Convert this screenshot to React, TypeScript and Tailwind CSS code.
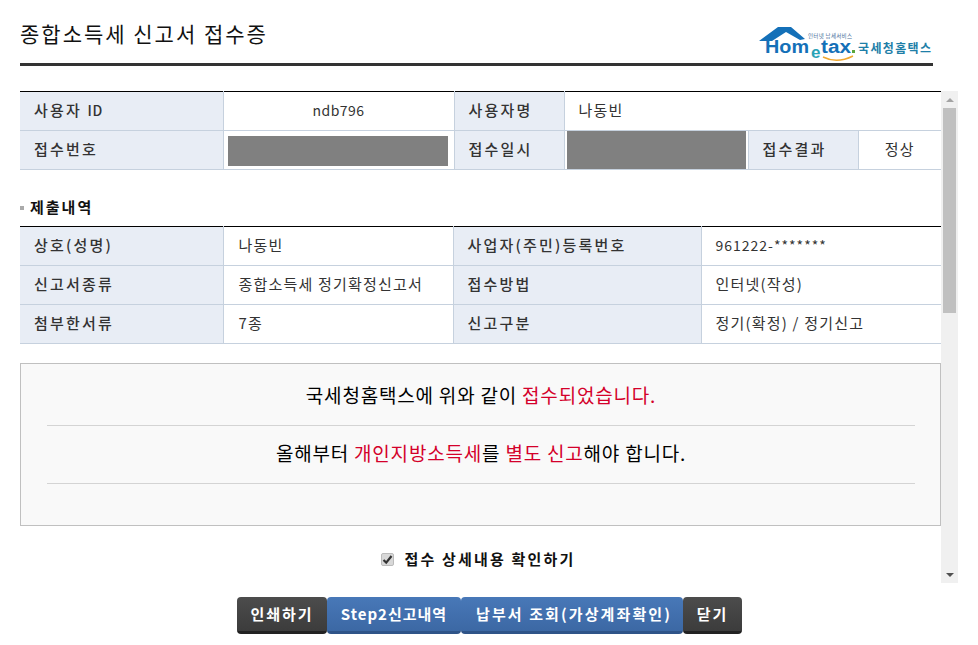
import React from 'react';

const KR = "font-['Noto_Sans_CJK_KR','Liberation_Sans',sans-serif]";
const thClass = "bg-[#e8edf5] border-t border-b border-[#c6d1de] border-l border-r pl-[14px] pb-[2px] text-left text-[15px] font-medium tracking-[2.2px] text-[#333] whitespace-nowrap first:border-l-0";
const tdClass = "border-t border-b border-[#c6d1de] border-l border-r pl-[14px] pb-[2px] text-left text-[15px] font-normal tracking-[1.2px] text-[#333] whitespace-nowrap last:border-r-0";
const tdCenter = "border-t border-b border-[#c6d1de] border-l border-r pb-[2px] text-center text-[15px] font-normal tracking-[1.2px] text-[#333] whitespace-nowrap last:border-r-0";

const filingRows = [
  { a: '상호(성명)', b: '나동빈', c: '사업자(주민)등록번호', d: '961222-*******', latin: true },
  { a: '신고서종류', b: '종합소득세 정기확정신고서', c: '접수방법', d: '인터넷(작성)' },
  { a: '첨부한서류', b: '7종', c: '신고구분', d: '정기(확정) / 정기신고' },
];

function Logo() {
  return (
    <svg width="174" height="36" viewBox="0 0 174 36">
      <path d="M0 14 L19 0 L32 0 L46 12 L41 13 L27 5 L13 14 Z" fill="#1470b8" />
      <text x="6" y="26" fontFamily="Liberation Sans" fontWeight="700" fontSize="18" fill="#1470b8" textLength="44" lengthAdjust="spacingAndGlyphs">Hom</text>
      <text x="52" y="31" fontFamily="Liberation Sans" fontWeight="700" fontSize="17" fill="#2aa3b8">e</text>
      <text x="62" y="26" fontFamily="Liberation Sans" fontWeight="700" fontSize="18" fill="#1470b8" textLength="30" lengthAdjust="spacingAndGlyphs">tax</text>
      <rect x="93" y="23" width="3" height="3" fill="#5aa53a" />
      <path d="M64 30 Q 78 37 94 29" stroke="#f0a830" strokeWidth="1.4" fill="none" />
      <text x="49" y="11" fontFamily="Noto Sans CJK KR" fontSize="5.5" fill="#4a6f9a" textLength="44">인터넷 납세서비스</text>
      <text x="99" y="26" fontFamily="Noto Sans CJK KR" fontWeight="700" fontSize="12" fill="#1f7fa8" textLength="73" lengthAdjust="spacing">국세청홈택스</text>
    </svg>
  );
}

function Btn({ label, blue, className }: { label: string; blue?: boolean; className: string }) {
  return (
    <div
      className={`${className} h-[37px] flex items-center justify-center rounded-[4px] text-white text-[15px] font-bold whitespace-nowrap border-b-[3px] ${
        blue
          ? 'bg-gradient-to-b from-[#4878b8] to-[#3c68a4] border-[#2f5488]'
          : 'bg-gradient-to-b from-[#4c4c4c] to-[#3c3c3c] border-[#222]'
      }`}
    >
      {label}
    </div>
  );
}

export default function App() {
  return (
    <div className={`${KR} w-[978px] h-[645px] overflow-hidden bg-white px-5`}>
      {/* Header */}
      <div className="w-[913px] h-[66px] border-b-[3px] border-[#333] flex justify-between items-end">
        <h1 className="text-[21px] font-normal tracking-[2px] text-[#111] mb-[16px] leading-[28px]">종합소득세 신고서 접수증</h1>
        <Logo />
      </div>

      {/* Scroll area */}
      <div className="mt-[25px] h-[492px] w-[938px] flex overflow-hidden">
        <div className="w-[921px] shrink-0">
          <table className="w-[921px] table-fixed border-collapse border-t border-black">
            <colgroup>
              <col className="w-[203px]" />
              <col className="w-[231px]" />
              <col className="w-[110px]" />
              <col className="w-[184px]" />
              <col className="w-[110px]" />
              <col className="w-[83px]" />
            </colgroup>
            <tbody>
              <tr className="h-[39px]">
                <th className={`${thClass} border-t-black`}>
                  사용자 <span className="text-[14px] tracking-[0.5px]">ID</span>
                </th>
                <td className={`${tdCenter} border-t-black text-[14px]! tracking-[0.5px]!`}>ndb796</td>
                <th className={`${thClass} border-t-black`}>사용자명</th>
                <td colSpan={3} className={`${tdClass} border-t-black`}>나동빈</td>
              </tr>
              <tr className="h-[39px]">
                <th className={thClass}>접수번호</th>
                <td className="border-t border-b border-[#c6d1de] border-l border-r pl-[4px] pr-[6px] pt-[1px]">
                  <div className="h-[30px] bg-[#808080]" />
                </td>
                <th className={thClass}>접수일시</th>
                <td className="border-t border-b border-[#c6d1de] border-l border-r px-[2px]">
                  <div className="h-[38px] bg-[#808080]" />
                </td>
                <th className={thClass}>접수결과</th>
                <td className={tdCenter}>정상</td>
              </tr>
            </tbody>
          </table>

          <div className="mt-[20px] h-[36px] flex items-center gap-[6px]">
            <span className="w-[4px] h-[4px] bg-[#aaa]" />
            <h2 className="text-[15px] font-bold tracking-[2px] text-[#111] mb-[2px]">제출내역</h2>
          </div>

          <table className="w-[921px] table-fixed border-collapse border-t border-black">
            <colgroup>
              <col className="w-[203px]" />
              <col className="w-[230px]" />
              <col className="w-[248px]" />
              <col className="w-[240px]" />
            </colgroup>
            <tbody>
              {filingRows.map((row, i) => (
                <tr key={row.a} className="h-[39px]">
                  <th className={`${thClass} ${i === 0 ? 'border-t-black' : ''}`}>{row.a}</th>
                  <td className={`${tdClass} pl-[15px]! ${i === 0 ? 'border-t-black' : ''}`}>{row.b}</td>
                  <th className={`${thClass} ${i === 0 ? 'border-t-black' : ''}`}>{row.c}</th>
                  <td className={`${tdClass} ${i === 0 ? 'border-t-black' : ''} ${row.latin ? 'text-[14px]! tracking-[1px]!' : ''}`}>{row.d}</td>
                </tr>
              ))}
            </tbody>
          </table>

          {/* Notice */}
          <div className="mt-[19px] h-[163px] border border-[#c0c0c0] bg-[#f9f9f9] pl-[26px] pr-[25px] pt-[15px] text-center text-[19px] tracking-[0.8px] text-black">
            <p className="h-[46px] leading-[32px]">
              국세청홈택스에 위와 같이 <span className="text-[#d4002a]">접수되었습니다.</span>
            </p>
            <div className="border-t border-[#d4d4d4] h-[58px] pt-[11px] leading-[32px]">
              올해부터 <span className="text-[#d4002a]">개인지방소득세</span>를 <span className="text-[#d4002a]">별도 신고</span>해야 합니다.
            </div>
            <div className="border-t border-[#d4d4d4]" />
          </div>

          <div className="mt-[23px] pr-[4px] flex justify-center items-center gap-[10px] h-[20px]">
            <div className="w-[13px] h-[13px] rounded-[2px] bg-[#d8d8d8] border border-[#bbb] flex items-center justify-center">
              <svg width="11" height="11" viewBox="0 0 11 11">
                <path d="M1.5 6 L4.2 8.6 L9.5 2" stroke="#333" strokeWidth="2.2" fill="none" />
              </svg>
            </div>
            <span className="text-[15px] font-bold tracking-[2.2px] text-[#111]">접수 상세내용 확인하기</span>
          </div>
        </div>

        {/* Scrollbar */}
        <div className="w-[17px] shrink-0 bg-[#f0f0f0] flex flex-col items-center">
          <div className="h-[17px] flex items-center justify-center">
            <div className="w-0 h-0 border-x-[4px] border-x-transparent border-b-[4px] border-b-[#a3a3a3]" />
          </div>
          <div className="w-[13px] h-[205px] bg-[#c0c0c0]" />
          <div className="flex-1" />
          <div className="h-[17px] flex items-center justify-center">
            <div className="w-0 h-0 border-x-[4px] border-x-transparent border-t-[4px] border-t-[#505050]" />
          </div>
        </div>
      </div>

      {/* Buttons */}
      <div className="mt-[14px] ml-[217px] flex">
        <Btn label="인쇄하기" className="w-[90px] tracking-[1.9px]" />
        <Btn label="Step2신고내역" blue className="w-[134px] tracking-[1px]" />
        <Btn label="납부서 조회(가상계좌확인)" blue className="w-[222px] pl-[4px] tracking-[2.1px]" />
        <Btn label="닫기" className="w-[59px] tracking-[1.9px]" />
      </div>
    </div>
  );
}
